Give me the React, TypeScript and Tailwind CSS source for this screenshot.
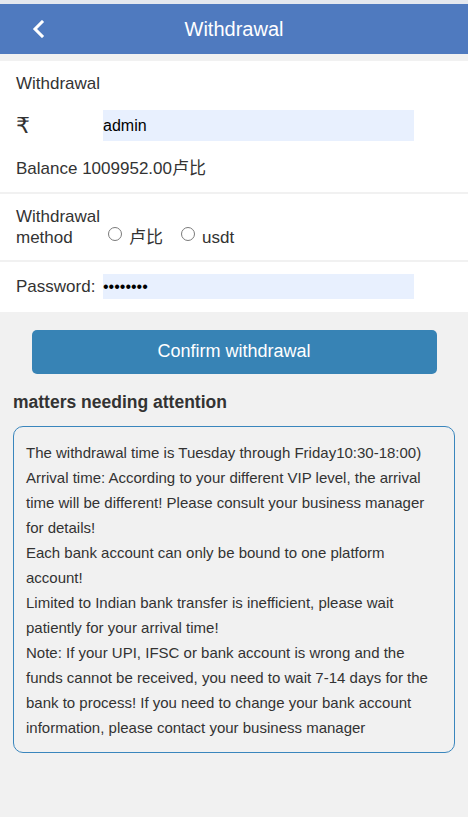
import { useState } from 'react';

const sans = { fontFamily: '"Liberation Sans", Arial, "Noto Sans CJK SC", sans-serif' };

export default function App() {
  const [method, setMethod] = useState<string>('');

  return (
    <div className="min-h-screen bg-[#f1f1f1] text-[#333]" style={sans}>
      <div className="h-[4px] bg-[#e4e8ef]" />
      <div className="relative flex h-[50px] items-center justify-center bg-[#4f7abf]">
        <button className="absolute left-[30px] top-[15px] flex h-[20px] w-[16px] items-center justify-center">
          <svg width="14" height="18" viewBox="0 0 14 18" fill="none">
            <polyline points="11,2 4,9 11,16" stroke="#fff" strokeWidth="3" strokeLinecap="square" />
          </svg>
        </button>
        <h1 className="text-[20px] leading-none text-white">Withdrawal</h1>
      </div>

      <div className="mt-[7px] bg-white px-[16px] pt-[11px] pb-[11px] text-[17px]">
        <div className="leading-[24px]">Withdrawal</div>
        <div className="mt-[14px] flex h-[31px] items-center">
          <span className="w-[87px] text-[22px] leading-none" style={{ fontFamily: '"DejaVu Sans", sans-serif' }}>₹</span>
          <input
            readOnly
            value="admin"
            className="h-[31px] w-[311px] bg-[#e8f0fe] p-0 text-[16px] text-black outline-none"
            style={sans}
          />
        </div>
        <div className="mt-[16px] leading-[24px]">Balance 1009952.00卢比</div>
      </div>

      <div className="mt-[2px] bg-white px-[16px] pt-[12px] pb-[12px] text-[17px] leading-[21px]">
        <span className="inline-block w-[87px] align-baseline">Withdrawal method</span>
        <label>
          <input
            type="radio"
            name="method"
            checked={method === 'rupee'}
            onChange={() => setMethod('rupee')}
            className="mr-[7px] ml-[5px] inline-block h-[14px] w-[14px] appearance-none rounded-full border border-[#7a7a7a] bg-white align-[2px] checked:border-[4px] checked:border-[#3783b5]"
          />
          卢比
        </label>
        <label className="ml-[13px]">
          <input
            type="radio"
            name="method"
            checked={method === 'usdt'}
            onChange={() => setMethod('usdt')}
            className="mr-[7px] ml-[5px] inline-block h-[14px] w-[14px] appearance-none rounded-full border border-[#7a7a7a] bg-white align-[2px] checked:border-[4px] checked:border-[#3783b5]"
          />
          usdt
        </label>
      </div>

      <div className="mt-[2px] flex items-center bg-white px-[16px] py-[12px] text-[17px]">
        <span className="w-[87px]">Password:</span>
        <input
          type="password"
          readOnly
          value="12345678"
          className="h-[25px] w-[311px] bg-[#e8f0fe] p-0 text-[16px] text-black outline-none"
          style={sans}
        />
      </div>

      <button className="mx-auto mt-[18px] flex h-[44px] w-[405px] items-center justify-center rounded-[5px] bg-[#3783b5] text-[18px] text-white">
        Confirm withdrawal
      </button>

      <h2 className="mt-[16px] px-[13px] text-[17.5px] font-bold leading-[24px]">matters needing attention</h2>

      <div className="mx-[13px] mt-[12px] rounded-[10px] border border-[#3a86bd] px-[12px] pt-[13px] pb-[12px] text-[15px] leading-[25px]">
        The withdrawal time is Tuesday through Friday10:30-18:00)
        <br />
        Arrival time: According to your different VIP level, the arrival time will be different! Please consult your business manager for details!
        <br />
        Each bank account can only be bound to one platform account!
        <br />
        Limited to Indian bank transfer is inefficient, please wait patiently for your arrival time!
        <br />
        Note: If your UPI, IFSC or bank account is wrong and the funds cannot be received, you need to wait 7-14 days for the bank to process! If you need to change your bank account information, please contact your business manager
      </div>
    </div>
  );
}
